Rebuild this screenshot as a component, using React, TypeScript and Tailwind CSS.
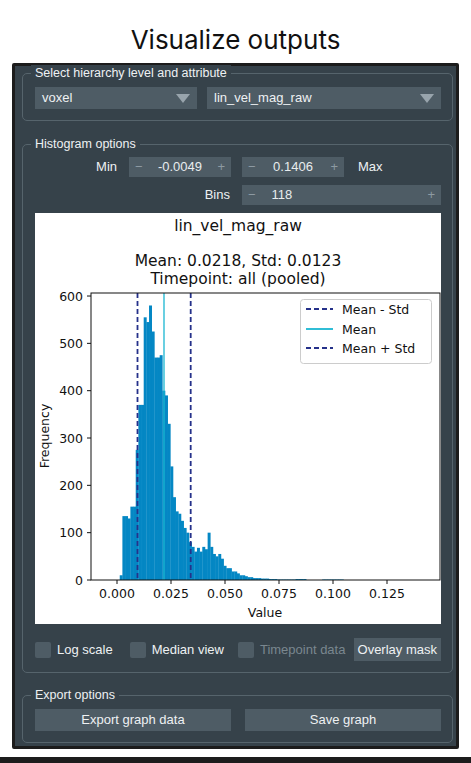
import React from "react";

const keys: [number, number][] = [
  [0.0005, 0], [0.0015, 10], [0.0025, 80], [0.003, 135], [0.004, 135], [0.005, 150], [0.006, 130], [0.007, 155], [0.008, 155],
  [0.009, 275], [0.010, 450], [0.011, 370], [0.012, 370], [0.013, 555], [0.014, 545], [0.015, 580], [0.016, 470],
  [0.017, 525], [0.018, 470], [0.019, 470], [0.020, 475], [0.021, 560], [0.022, 400], [0.023, 390], [0.024, 330],
  [0.025, 240], [0.026, 230], [0.027, 175], [0.028, 145], [0.029, 140], [0.030, 125], [0.031, 110], [0.032, 105],
  [0.033, 100], [0.034, 80], [0.035, 70], [0.036, 60], [0.037, 60], [0.038, 68], [0.039, 60], [0.040, 70], [0.041, 65],
  [0.042, 70], [0.043, 100], [0.044, 70], [0.045, 55], [0.046, 50], [0.047, 65], [0.048, 55], [0.049, 45], [0.050, 30],
  [0.052, 25], [0.054, 18], [0.056, 14], [0.058, 10], [0.060, 8], [0.062, 6], [0.065, 4], [0.068, 3], [0.072, 2],
  [0.076, 1], [0.080, 1], [0.085, 2], [0.09, 0], [0.1, 1], [0.11, 0], [0.2, 0],
];
function h(v: number) {
  let best = keys[0];
  for (const k of keys) if (Math.abs(k[0] - v) < Math.abs(best[0] - v)) best = k;
  return best[1];
}
const bw = 0.1455 / 118;
const xp = (v: number) => 82 + v * 2160;
const yp = (f: number) => 367 - f * 0.4733;

function Chart() {
  const bars = [];
  for (let i = 0; i < 118; i++) {
    const v0 = -0.0049 + i * bw;
    const f = h(v0 + bw / 2);
    if (f <= 0) continue;
    bars.push(<rect key={i} x={xp(v0)} y={yp(f)} width={bw * 2160 + 0.3} height={f * 0.4733} fill="#0487c4" />);
  }
  const font = { fontFamily: "'DejaVu Sans', sans-serif" };
  return (
    <svg width="406" height="411" viewBox="0 0 406 411" className="block" style={font}>
      <rect width="406" height="411" fill="#fff" />
      <text x="203" y="18" fontSize="15.5" textAnchor="middle" fill="#111">lin_vel_mag_raw</text>
      <text x="203" y="53" fontSize="15.5" textAnchor="middle" fill="#111">Mean: 0.0218, Std: 0.0123</text>
      <text x="203" y="71" fontSize="15.5" textAnchor="middle" fill="#111">Timepoint: all (pooled)</text>
      {bars}
      <line x1="102.5" y1="80" x2="102.5" y2="367" stroke="#25318a" strokeWidth="1.8" strokeDasharray="5 3" />
      <line x1="129" y1="80" x2="129" y2="367" stroke="#19b6d2" strokeWidth="1.3" />
      <line x1="155.7" y1="80" x2="155.7" y2="367" stroke="#25318a" strokeWidth="1.8" strokeDasharray="5 3" />
      <rect x="56" y="80" width="349" height="287" fill="none" stroke="#111" strokeWidth="1" />
      {[0, 100, 200, 300, 400, 500, 600].map((t) => (
        <g key={t}>
          <line x1="52" x2="56" y1={yp(t)} y2={yp(t)} stroke="#111" />
          <text x="48" y={yp(t) + 4.5} fontSize="12.5" textAnchor="end" fill="#111">{t}</text>
        </g>
      ))}
      {[0, 0.025, 0.05, 0.075, 0.1, 0.125].map((t) => (
        <g key={t}>
          <line y1="367" y2="371" x1={xp(t)} x2={xp(t)} stroke="#111" />
          <text y="385" x={xp(t)} fontSize="12.5" textAnchor="middle" fill="#111">{t.toFixed(3)}</text>
        </g>
      ))}
      <text x="230" y="404" fontSize="12.5" textAnchor="middle" fill="#111">Value</text>
      <text transform="translate(14 223) rotate(-90)" fontSize="12.5" textAnchor="middle" fill="#111">Frequency</text>
      <rect x="265.5" y="86.5" width="131" height="64" rx="3" fill="#fff" stroke="#ccc" />
      <line x1="271" x2="298" y1="96" y2="96" stroke="#25318a" strokeWidth="1.8" strokeDasharray="5 3" />
      <text x="307" y="100.5" fontSize="12.5" fill="#111">Mean - Std</text>
      <line x1="271" x2="298" y1="116" y2="116" stroke="#19b6d2" strokeWidth="1.8" />
      <text x="307" y="120.5" fontSize="12.5" fill="#111">Mean</text>
      <line x1="271" x2="298" y1="135" y2="135" stroke="#25318a" strokeWidth="1.8" strokeDasharray="5 3" />
      <text x="307" y="139.5" fontSize="12.5" fill="#111">Mean + Std</text>
    </svg>
  );
}

const Tri = () => <span className="w-0 h-0 border-l-[7px] border-r-[7px] border-t-[9px] border-l-transparent border-r-transparent border-t-[#98a4ac]" />;

function Spin({ value, className, center = true }: { value: string; className: string; center?: boolean }) {
  return (
    <div className={`h-[20px] bg-[#4e5c65] flex items-center px-[6px] text-[13px] text-[#8d9aa2] ${className}`}>
      <span>−</span>
      <span className={`flex-1 text-[#e8ecee] ${center ? "text-center" : "pl-[16px]"} overflow-hidden whitespace-nowrap`}>{value}</span>
      <span>+</span>
    </div>
  );
}

function Group({ title, children, className }: { title: string; children: React.ReactNode; className?: string }) {
  return (
    <div className={`relative border border-[#56646c] rounded-[5px] ${className}`}>
      <span className="absolute -top-[9px] left-[8px] px-[4px] bg-[#36424a] text-[12.5px] text-[#eef1f3] leading-[16px]">{title}</span>
      {children}
    </div>
  );
}

function Check({ label, dim }: { label: string; dim?: boolean }) {
  return (
    <div className="flex items-center gap-[6px]">
      <span className="w-[16px] h-[16px] bg-[#4e5c65] rounded-[2px]" />
      <span className={`text-[13px] ${dim ? "text-[#7a878f]" : "text-[#eef1f3]"}`}>{label}</span>
    </div>
  );
}

export default function App() {
  return (
    <div className="w-[471px] h-[763px] bg-white relative overflow-hidden" style={{ fontFamily: "'Liberation Sans', Arial, sans-serif" }}>
      <div className="h-[63px] flex items-center justify-center pt-[22px] pb-[6px] text-[26px] text-[#111]" style={{ fontFamily: "Inter, sans-serif" }}>
        Visualize outputs
      </div>
      <div className="mx-[12px] h-[686px] bg-[#36424a] border-[3px] border-[#1c1c1c] rounded-[2px] pl-[7px] pr-[3px] pt-[7px] text-[#eef1f3]">
        <Group title="Select hierarchy level and attribute" className="h-[48px] pt-[13px] pl-[12px] pr-[11px]">
          <div className="flex gap-[10px]">
            <div className="w-[162px] h-[22px] bg-[#4e5c65] flex items-center justify-between px-[7px] text-[13px]">voxel<Tri /></div>
            <div className="flex-1 h-[22px] bg-[#4e5c65] flex items-center justify-between px-[7px] text-[13px]">lin_vel_mag_raw<Tri /></div>
          </div>
        </Group>
        <Group title="Histogram options" className="mt-[23px] h-[529px] pt-[12px] pl-[12px] pr-[11px]">
          <div className="flex items-center h-[20px]">
            <span className="w-[82px] text-right text-[13px]">Min</span>
            <Spin value="-0.0049" className="ml-[12px] w-[102px]" />
            <Spin value="0.1406" className="ml-[11px] w-[102px]" />
            <span className="ml-[14px] text-[13px]">Max</span>
          </div>
          <div className="flex items-center h-[20px] mt-[8px]">
            <span className="w-[195px] text-right text-[13px]">Bins</span>
            <Spin value="118" center={false} className="ml-[12px] flex-1" />
          </div>
          <div className="mt-[8px]"><Chart /></div>
          <div className="flex items-center mt-[14px] h-[23px]">
            <Check label="Log scale" />
            <div className="ml-[17px]"><Check label="Median view" /></div>
            <div className="ml-[14px]"><Check label="Timepoint data" dim /></div>
            <div className="ml-auto h-[23px] px-[4px] bg-[#4e5c65] flex items-center text-[13px]">Overlay mask</div>
          </div>
        </Group>
        <Group title="Export options" className="mt-[22px] h-[48px] pt-[13px] pl-[12px] pr-[11px]">
          <div className="flex gap-[14px]">
            <div className="flex-1 h-[22px] bg-[#4e5c65] flex items-center justify-center text-[13px]">Export graph data</div>
            <div className="flex-1 h-[22px] bg-[#4e5c65] flex items-center justify-center text-[13px]">Save graph</div>
          </div>
        </Group>
      </div>
      <div className="absolute left-0 right-0 bottom-0 h-[6px] bg-[#1c1c1c]" />
    </div>
  );
}
